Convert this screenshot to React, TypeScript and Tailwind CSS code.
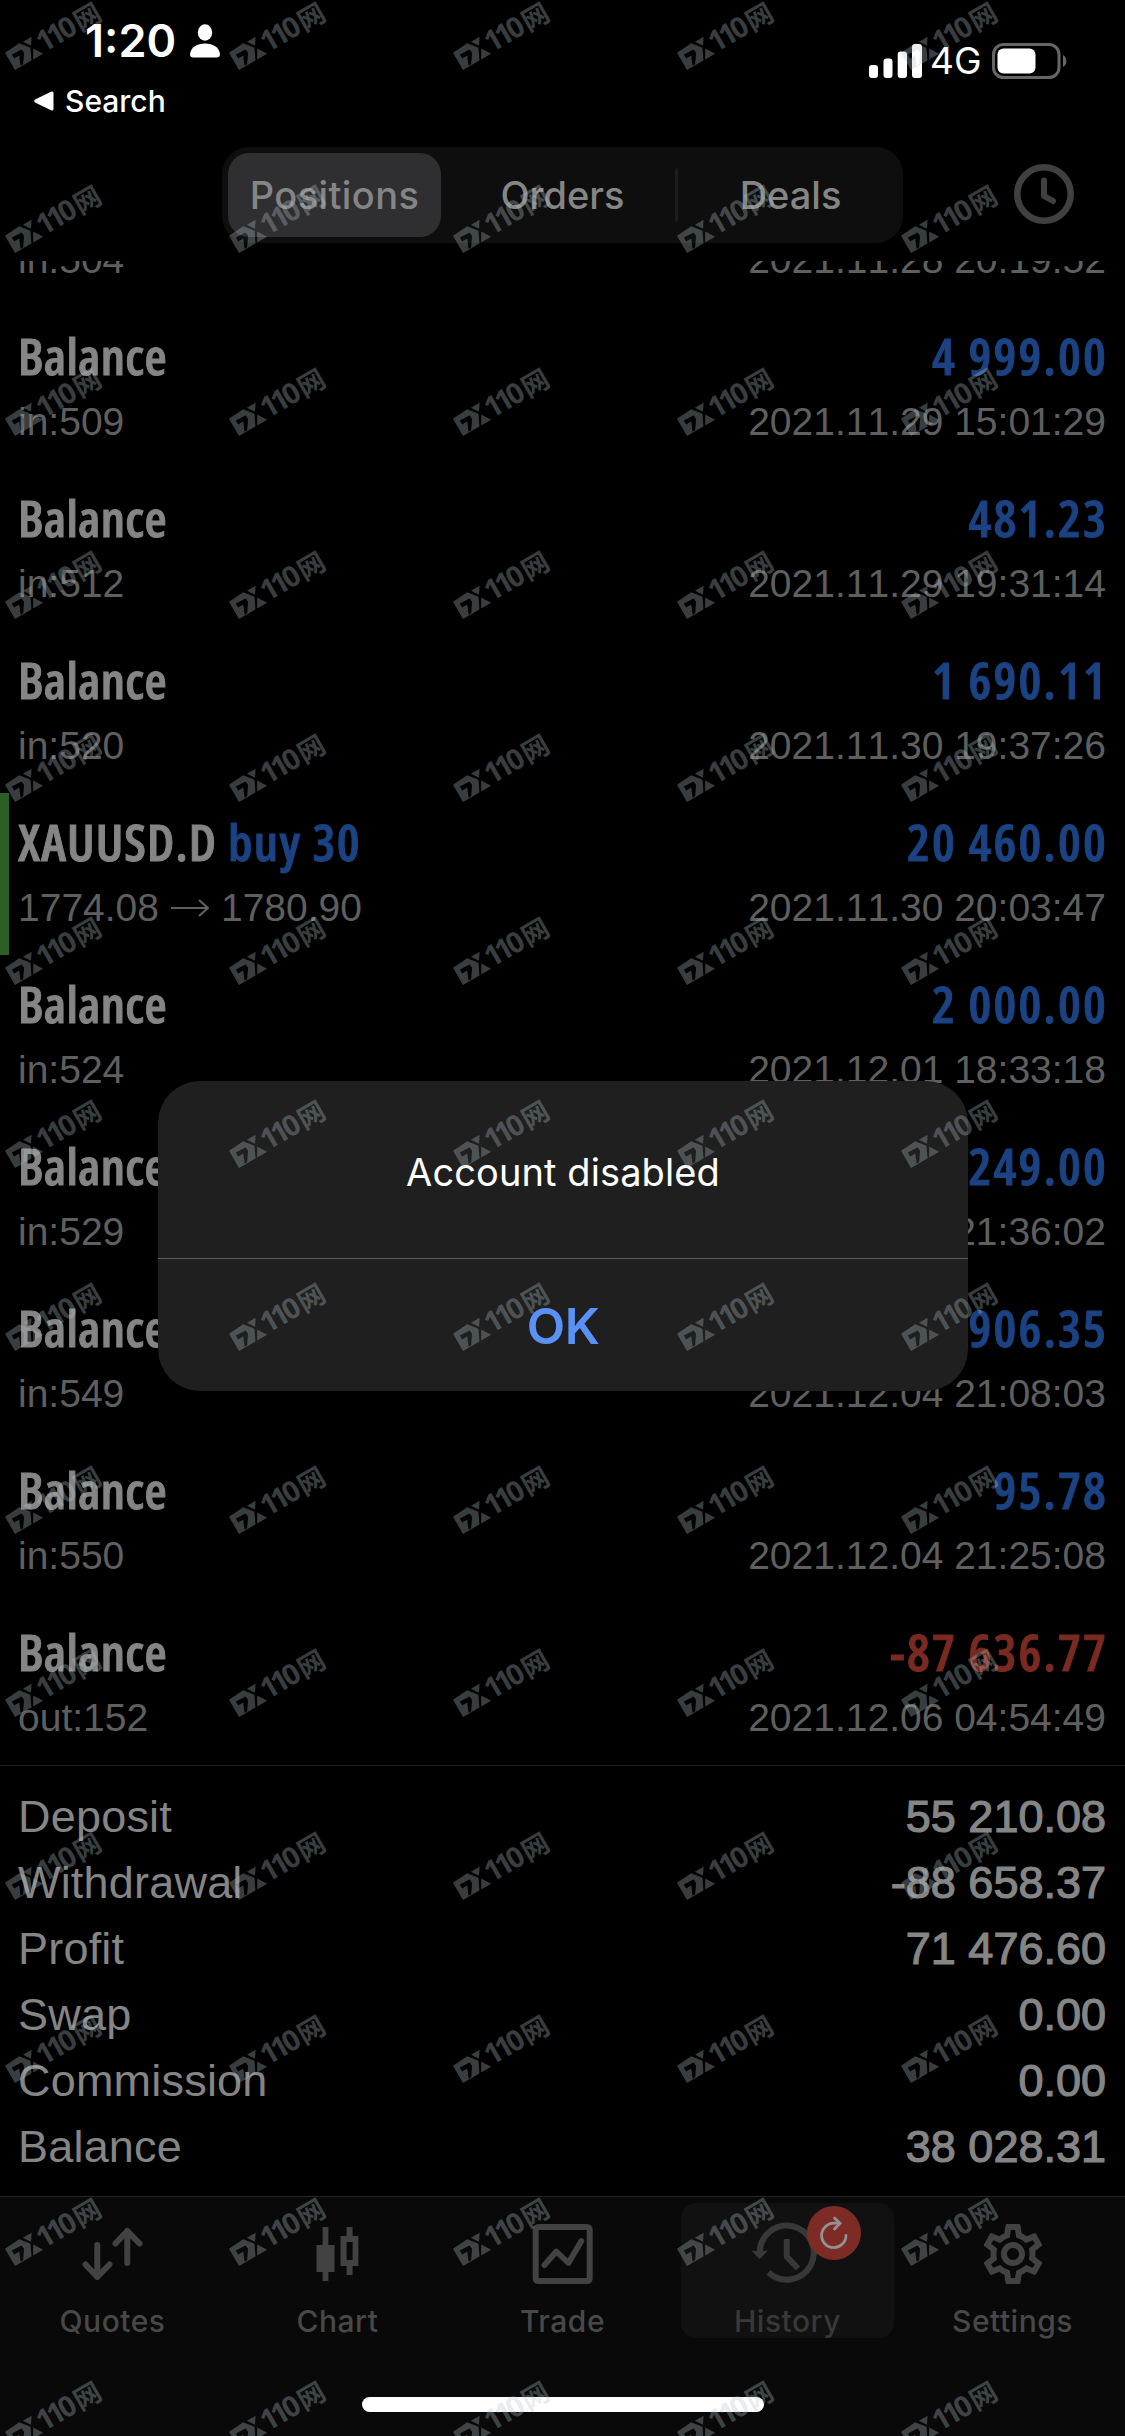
import type { ReactNode } from "react";
import { MdOutlineSettings } from "react-icons/md";

type HistoryRow = {
  title: string;
  action?: string;
  amount: string;
  detail: ReactNode;
  time: string;
  loss?: boolean;
};

const rows: HistoryRow[] = [
  { title: "Balance", amount: "500.00", detail: "in:504", time: "2021.11.28 20:19:52" },
  { title: "Balance", amount: "4 999.00", detail: "in:509", time: "2021.11.29 15:01:29" },
  { title: "Balance", amount: "481.23", detail: "in:512", time: "2021.11.29 19:31:14" },
  { title: "Balance", amount: "1 690.11", detail: "in:520", time: "2021.11.30 19:37:26" },
  {
    title: "XAUUSD.D",
    action: "buy 30",
    amount: "20 460.00",
    detail: (
      <>
        1774.08
        <svg className="mx-3 h-[20px] w-[38px]" viewBox="0 0 38 20" fill="none" stroke="currentColor" strokeWidth="2.2">
          <path d="M0 10H36M28 2L37 10L28 18" />
        </svg>
        1780.90
      </>
    ),
    time: "2021.11.30 20:03:47",
  },
  { title: "Balance", amount: "2 000.00", detail: "in:524", time: "2021.12.01 18:33:18" },
  { title: "Balance", amount: "249.00", detail: "in:529", time: "2021.12.01 21:36:02" },
  { title: "Balance", amount: "906.35", detail: "in:549", time: "2021.12.04 21:08:03" },
  { title: "Balance", amount: "95.78", detail: "in:550", time: "2021.12.04 21:25:08" },
  { title: "Balance", amount: "-87 636.77", detail: "out:152", time: "2021.12.06 04:54:49", loss: true },
];

const totals = [
  ["Deposit", "55 210.08"],
  ["Withdrawal", "-88 658.37"],
  ["Profit", "71 476.60"],
  ["Swap", "0.00"],
  ["Commission", "0.00"],
  ["Balance", "38 028.31"],
];

function StatusBar() {
  return (
    <div className="flex h-[126px] justify-between text-white">
      <div className="flex flex-col pl-[34px]">
        <div className="flex items-center gap-[14px] pl-[51px] pt-[13px]">
          <span className="text-[45px] font-semibold leading-[56px]">1:20</span>
          <svg className="h-[34px] w-[30px]" viewBox="0 0 30 34" fill="currentColor">
            <ellipse cx="15" cy="8.5" rx="7.2" ry="8.2" />
            <path d="M0 30C1 23 7 19.5 15 19.5S29 23 30 30C30 32.5 29 33.5 26.500 33.500H3.500C1 33.500 0 32.500 0 30Z" />
          </svg>
        </div>
        <div className="mt-[12px] flex items-center gap-[11px]">
          <svg className="h-[20px] w-[20px]" viewBox="0 0 20 20" fill="currentColor">
            <path d="M1 8.500L17.500 0.500Q19.500 0 19.500 2V18Q19.500 20 17.500 19.500L1 11.500Q-0.500 10 1 8.500Z" />
          </svg>
          <span className="text-[30px] font-medium leading-[40px]">Search</span>
        </div>
      </div>
      <div className="flex h-[121px] items-center pr-[58px]">
        <svg className="h-[34px] w-[53px]" viewBox="0 0 53 34" fill="currentColor">
          <rect x="0" y="21" width="9" height="13" rx="3" />
          <rect x="14.500" y="14.500" width="9" height="19.500" rx="3" />
          <rect x="28.700" y="7.500" width="9.300" height="26.500" rx="3" />
          <rect x="43" y="0" width="10" height="34" rx="3" />
        </svg>
        <span className="ml-[8px] w-[62px] text-[37px] leading-[40px]">4G</span>
        <svg className="h-[36px] w-[75px]" viewBox="0 0 75 36">
          <rect x="1.500" y="1.500" width="65.500" height="33" rx="10" fill="none" stroke="#666" strokeWidth="3" />
          <rect x="5.500" y="5.500" width="38" height="25" rx="6" fill="#fff" />
          <path d="M71 12C75.500 14 75.500 22 71 24Z" fill="#666" />
        </svg>
      </div>
    </div>
  );
}

function TabsHeader() {
  return (
    <div className="flex h-[135px] items-start pl-[222px] pt-[21px]">
      <div className="flex h-[96px] w-[681px] items-center rounded-[27px] bg-[#0e0e0e] text-[38px] font-medium text-[#858585]">
        <div className="ml-[6px] flex h-[84px] w-[213px] items-center justify-center rounded-[21px] bg-[#2f2f31] tracking-[0.4px]">
          Positions
        </div>
        <div className="flex h-full w-[234px] items-center justify-center pl-[9px]">Orders</div>
        <div className="h-[54px] w-[3px] rounded bg-[#1c1c1c]" />
        <div className="flex h-full flex-1 items-center justify-center">Deals</div>
      </div>
      <svg className="ml-[111px] mt-[17px] h-[60px] w-[60px]" viewBox="0 0 60 60" fill="none" stroke="#404040" strokeWidth="6.500" strokeLinecap="round" strokeLinejoin="round">
        <circle cx="30" cy="30" r="26.700" />
        <path d="M30 16.500V32L39 37" strokeWidth="6" />
      </svg>
    </div>
  );
}

function HistoryItem({ row }: { row: HistoryRow }) {
  return (
    <div
      className={`h-[162px] shrink-0 border-l-[9px] pl-[9px] pr-[19px] pt-[18px] ${
        row.action ? "border-[#2a6024]" : "border-transparent"
      }`}
    >
      <div className="flex justify-between font-['Open_Sans'] text-[51px] font-semibold leading-[60px] [font-stretch:75%] [-webkit-text-stroke:1px]">
        <span className={`whitespace-pre text-[#858585] ${row.action ? "tracking-[1.1px]" : "tracking-[0.3px]"}`}>
          {row.title}
          {row.action && <span className="tracking-[1.5px] text-[#1b4282]"> {row.action}</span>}
        </span>
        <span className={`mr-[-2px] tracking-[2.2px] ${row.loss ? "text-[#7a2a21]" : "text-[#1b4282]"}`}>
          {row.amount}
        </span>
      </div>
      <div className="mt-[12px] flex justify-between font-['Liberation_Sans'] text-[39px] leading-[50px] text-[#5f5f5f] [font-kerning:none]">
        <span className="flex items-center">{row.detail}</span>
        <span>{row.time}</span>
      </div>
    </div>
  );
}

function Totals() {
  return (
    <div className="h-[431px] border-t border-[#1e1e1e] pl-[18px] pr-[19px] pt-[18px] font-['Liberation_Sans'] text-[45px] leading-[66px] text-[#858585]">
      {totals.map(([label, value]) => (
        <div key={label} className="flex justify-between">
          <span className="tracking-[0.2px]">{label}</span>
          <span className="[-webkit-text-stroke:1.2px_#858585]">{value}</span>
        </div>
      ))}
    </div>
  );
}

function QuotesIcon() {
  return (
    <svg className="h-16 w-16" viewBox="0 0 64 64" fill="none" stroke="#424242" strokeWidth="6" strokeLinecap="round" strokeLinejoin="round">
      <path d="M16.300 23V55M4.500 42.500L16.300 55L28.500 42.500M46.300 41V9M34.500 21.500L46.300 9L58.500 21.500" />
    </svg>
  );
}

function ChartIcon() {
  return (
    <svg className="h-16 w-16" viewBox="0 0 64 64" fill="#424242">
      <path d="M10.500 23H16.600V5H22.400V23H28.500V50H22.400V59H16.600V50H10.500Z" />
      <path fillRule="evenodd" d="M34.500 14H40.600V5H46.600V14H52.400V44H46.600V53H40.600V44H34.500ZM40.600 20V38H46.600V20Z" />
    </svg>
  );
}

function TradeIcon() {
  return (
    <svg className="h-16 w-16" viewBox="0 0 64 64" fill="none" stroke="#424242" strokeWidth="6" strokeLinejoin="round">
      <rect x="4.700" y="5" width="54" height="54" rx="2.500" />
      <path d="M13.500 43L25.300 29.500L37.500 41L50.300 19" strokeLinecap="round" strokeWidth="5.800" />
    </svg>
  );
}

function HistoryIcon() {
  return (
    <svg className="h-16 w-16 overflow-visible" viewBox="0 0 64 64" fill="none" stroke="#383838" strokeWidth="6">
      <path d="M3.800 32A27 27 0 1 1 12.500 50.500" />
      <path d="M30.800 17V34.500L42 46.500" />
      <path d="M-4.500 28.700H11.700L3.600 37.300Z" fill="#383838" stroke="none" />
    </svg>
  );
}

const tabs = [
  { name: "Quotes", icon: <QuotesIcon /> },
  { name: "Chart", icon: <ChartIcon /> },
  { name: "Trade", icon: <TradeIcon /> },
  { name: "History", icon: <HistoryIcon />, active: true },
  {
    name: "Settings",
    icon: (
      <span className="flex h-16 w-16 items-center justify-center">
        <MdOutlineSettings className="shrink-0 text-[#424242]" size={72} />
      </span>
    ),
  },
];

function TabBar() {
  return (
    <div className="flex h-[240px] flex-col border-t border-[#262626] bg-[#090909]">
      <div className="flex pt-[6px]">
        {tabs.map((tab) => (
          <div key={tab.name} className="flex w-[225px] justify-center">
            <div
              className={`relative flex h-[135px] w-[213px] flex-col items-center rounded-[15px] pt-[19px] text-[30px] font-medium tracking-[0.5px] ${
                tab.active ? "bg-[#111] text-[#383838]" : "text-[#484848]"
              }`}
            >
              <div className="h-16 w-16 shrink-0">{tab.icon}</div>
              <span className="mt-[15px] block h-[36px] shrink-0 leading-[40px]">{tab.name}</span>
              {tab.active && (
                <div className="absolute left-[126px] top-[3px] flex h-[54px] w-[54px] items-center justify-center rounded-full bg-[#7d2b24]">
                  <svg className="h-[34px] w-[30px]" viewBox="0 0 30 34" fill="none" stroke="#929292" strokeWidth="2.800" strokeLinecap="round">
                    <path d="M27 19.500A12.200 12.200 0 1 1 15 7.200H20" />
                    <path d="M15.500 2L21 7.200L15.500 13" />
                  </svg>
                </div>
              )}
            </div>
          </div>
        ))}
      </div>
      <div className="mx-auto mt-[59px] h-[15px] w-[402px] rounded-full bg-white" />
    </div>
  );
}

function AlertDialog() {
  return (
    <div className="absolute left-[158px] top-[1081px] flex h-[310px] w-[810px] flex-col rounded-[42px] bg-[#1f1f1f] text-center">
      <div className="h-[178px] border-b border-[#5f5f5f] pt-[66px] text-[38px] leading-[50px] tracking-[0.1px] text-white">
        Account disabled
      </div>
      <button className="flex-1 pt-[2px] text-[50px] font-semibold tracking-[-0.5px] text-[#5a91f5]">OK</button>
    </div>
  );
}

// Tiled brand stamp that covers the whole screen
function Watermark() {
  return (
    <div className="pointer-events-none absolute inset-0 grid grid-cols-[repeat(5,224px)] auto-rows-[183px] overflow-hidden">
      {Array.from({ length: 70 }, (_, i) => (
        <svg key={i} className="h-[183px] w-[224px] overflow-visible" viewBox="0 0 224 183" fill="#b5c8ce" fillOpacity="0.31">
          <g transform="translate(15 70) rotate(-30)">
            <path fillRule="evenodd" d="M0 0V-20L17 -21L24.500 -11.500L19 0ZM5 -15L16 -14.500L16.500 -10.500L10 -1H7L11 -10.500H5Z" />
            <path d="M21 -20.500H31L26 -13ZM26.500 -9.500L32.500 0H21Z" />
            <text x="33 45 58" y="-0.500" className="font-['Open_Sans'] text-[29px] font-bold">
              110
            </text>
            <text x="75.500" y="0" className="font-['Noto_Sans_CJK_SC',sans-serif] text-[27px] font-bold">
              网
            </text>
          </g>
        </svg>
      ))}
    </div>
  );
}

export default function App() {
  return (
    <div className="relative flex h-[2436px] w-[1125px] flex-col overflow-hidden bg-black font-['Inter']">
      <StatusBar />
      <TabsHeader />
      {/* scrolled to the end, so the oldest row is cut by the header */}
      <div className="flex h-[1504px] flex-col justify-end overflow-hidden">
        {rows.map((row) => (
          <HistoryItem key={row.time} row={row} />
        ))}
      </div>
      <Totals />
      <TabBar />
      <AlertDialog />
      <Watermark />
    </div>
  );
}
